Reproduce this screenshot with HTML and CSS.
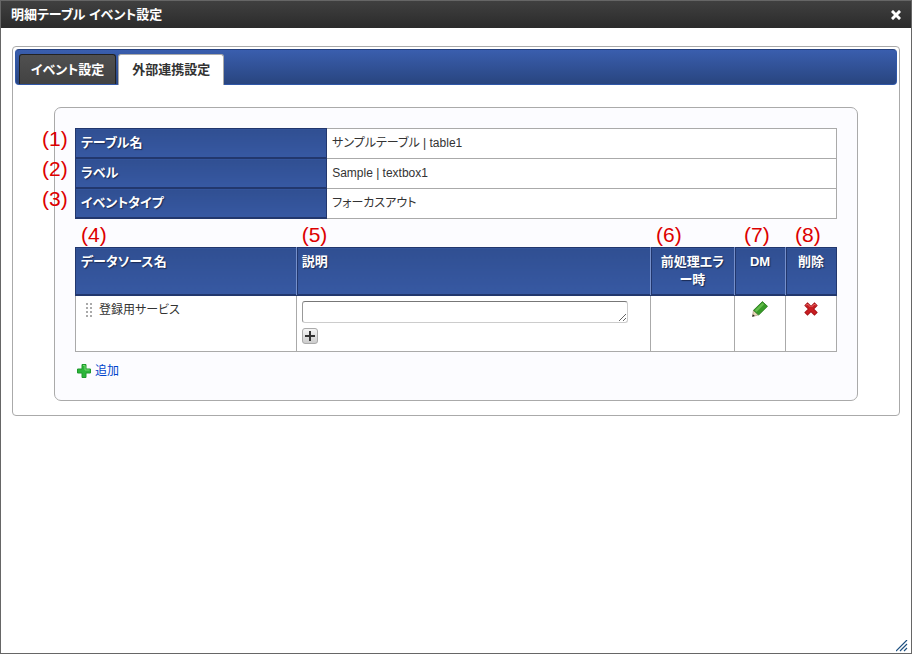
FILE: index.html
```html
<!DOCTYPE html>
<html lang="ja">
<head>
	<meta charset="utf-8">
	<title>明細テーブル イベント設定</title>
	<link rel="stylesheet" href="styles.css">
</head>
<body>
<div class="dialog">
	<div class="titlebar">
		<h1>明細テーブル イベント設定</h1>
		<button type="button" class="close" aria-label="閉じる">
			<svg width="10" height="10" viewBox="0 0 10 10"><path d="M2 2L8 8M8 2L2 8" stroke="#fff" stroke-width="3" stroke-linecap="square"/></svg>
		</button>
	</div>

	<div class="tabs">
		<ul class="tabnav">
			<li><a href="#event">イベント設定</a></li>
			<li class="active"><a href="#external">外部連携設定</a></li>
		</ul>

		<div class="panel" id="external">
			<table class="info">
				<tr>
					<th scope="row"><span class="mark">(1)</span>テーブル名</th>
					<td>サンプルテーブル | table1</td>
				</tr>
				<tr>
					<th scope="row"><span class="mark">(2)</span>ラベル</th>
					<td>Sample | textbox1</td>
				</tr>
				<tr>
					<th scope="row"><span class="mark">(3)</span>イベントタイプ</th>
					<td>フォーカスアウト</td>
				</tr>
			</table>

			<table class="list">
				<colgroup>
					<col class="col-name">
					<col class="col-desc">
					<col class="col-error">
					<col class="col-icon">
					<col class="col-icon">
				</colgroup>
				<thead>
					<tr>
						<th scope="col"><span class="mark">(4)</span>データソース名</th>
						<th scope="col"><span class="mark">(5)</span><label for="desc">説明</label></th>
						<th scope="col" class="center"><span class="mark">(6)</span>前処理エラー時</th>
						<th scope="col" class="center narrow"><span class="mark">(7)</span>DM</th>
						<th scope="col" class="center narrow"><span class="mark">(8)</span>削除</th>
					</tr>
				</thead>
				<tbody>
					<tr>
						<td>
							<div class="source">
								<svg class="grip" width="6" height="14" viewBox="0 0 6 14" fill="#aaa"><path d="M0 0h2v2H0zM4 0h2v2H4zM0 4h2v2H0zM4 4h2v2H4zM0 8h2v2H0zM4 8h2v2H4zM0 12h2v2H0zM4 12h2v2H4z"/></svg>
								登録用サービス
							</div>
						</td>
						<td>
							<textarea id="desc" rows="1"></textarea>
							<button type="button" class="expand" aria-label="拡張">
								<svg width="10" height="10" viewBox="0 0 10 10"><path d="M5 0V10M0 5H10" stroke="#333" stroke-width="2"/></svg>
							</button>
						</td>
						<td></td>
						<td class="center">
							<button type="button" class="icon" aria-label="DM">
								<svg width="16" height="16" viewBox="0 0 16 16">
									<path d="M1.400 9.500L6 14L.5 15.500z" fill="#ead9bb" stroke="#a08c6c" stroke-width=".6"/>
									<path d="M.8 13.200L2.900 14.900L.2 15.800z" fill="#222"/>
									<path d="M1.500 9.300L10.400 .6L15.500 5.300L6.700 14z" fill="#379b27" stroke="#227317" stroke-width=".8"/>
									<path d="M2.800 9.300L10.500 1.700L12.200 3.300L4.500 10.900z" fill="#63bb4a"/>
								</svg>
							</button>
						</td>
						<td class="center">
							<button type="button" class="icon" aria-label="削除">
								<svg width="16" height="16" viewBox="0 0 16 16">
									<path d="M4.500 4.500L11.500 11.500M11.500 4.500L4.500 11.500" stroke="#a51217" stroke-width="4.600" stroke-linecap="square"/>
									<path d="M4.500 4.500L11.500 11.500M11.500 4.500L4.500 11.500" stroke="#c81d21" stroke-width="3" stroke-linecap="square"/>
									<path d="M3 4.500L4.500 3L7.500 6M8.500 6L11.500 3L13 4.500" fill="none" stroke="#ec7373"/>
								</svg>
							</button>
						</td>
					</tr>
				</tbody>
			</table>

			<a class="add" href="#add">
				<svg width="14" height="14" viewBox="0 0 14 14">
					<path d="M5 .5H9V5H13.500V9H9V13.500H5V9H.5V5H5z" fill="#2cb53a" stroke="#1f9a2d"/>
					<path d="M6 1.500H8V6H12.500" fill="none" stroke="#74d86f"/>
				</svg>
				追加
			</a>
		</div>
	</div>

	<svg class="resize" width="12" height="12" viewBox="0 0 12 12"><path d="M0 11L11 0M4 11L11 4M8 11L11 8" stroke="#1d4f80" stroke-width="1.200"/></svg>
</div>
</body>
</html>
```
FILE: styles.css
```css
* { box-sizing: border-box; }

body {
	margin: 0;
	font-family: "Liberation Sans", "Noto Sans CJK JP", sans-serif;
	font-size: 12px;
	line-height: 18px;
	font-feature-settings: "palt";
	color: #333;
	background: #fff;
}

button {
	display: inline-flex;
	align-items: center;
	justify-content: center;
	padding: 0;
	border: 0;
	background: none;
	cursor: pointer;
}

.dialog {
	position: relative;
	min-height: 100vh;
	border: 1px solid #666;
}
.titlebar {
	display: flex;
	align-items: center;
	justify-content: space-between;
	height: 27px;
	padding: 0 10px;
	background: linear-gradient(#404040, #2b2b2b);
}
.titlebar h1 {
	margin: 0;
	font-size: 13px;
	color: #fff;
}
.resize {
	position: absolute;
	right: 3px;
	bottom: 1px;
}

.tabs {
	margin: 18px 11px 0;
	padding: 2px;
	border: 1px solid #aaa;
	border-radius: 4px;
}
.tabnav {
	display: flex;
	gap: 2px;
	height: 36px;
	margin: 0;
	padding: 4px 3px 0;
	list-style: none;
	background: linear-gradient(#3a5eae, #29457f);
	border: 1px solid #3057a7;
	border-top-color: #25417f;
	border-radius: 4px;
}
.tabnav a {
	display: block;
	height: 30px;
	padding: 6px 11px;
	border: 1px solid #222;
	border-bottom: 0;
	border-radius: 3px 3px 0 0;
	background: linear-gradient(#505050, #424242);
	font-size: 13px;
	font-weight: bold;
	color: #fff;
	text-decoration: none;
}
.tabnav .active a {
	height: 31px;
	padding: 6px 13px;
	border-color: #aaa;
	background: #fff;
	color: #333;
}

.panel {
	margin: 22px 39px 12px;
	padding: 20px;
	border: 1px solid #aaa;
	border-radius: 7px;
	background: #fcfcff;
}

table {
	width: 100%;
	border-collapse: collapse;
	table-layout: fixed;
}
th, td {
	padding: 5px;
	border: 1px solid #aaa;
	text-align: left;
	vertical-align: top;
}
td { background: #fff; }
th {
	position: relative;
	border-color: #22376d;
	background: linear-gradient(#304f92, #3759a3);
	font-size: 13px;
	color: #fff;
	text-shadow: 1px 1px 1px #1a2b55;
}
.center { text-align: center; }

.info th {
	width: 33%;
	box-shadow: inset 0 -1px #22376d;
}
.info td, .info th { padding: 5px 5px 6px; }

.list { margin-top: 28px; }
.list th {
	height: 48px;
	line-break: anywhere;
	box-shadow: inset 0 -1px #22376d;
}
.list th + th { box-shadow: inset 0 -1px #22376d, inset 1px 0 #22376d; }
.list th:not(:last-child) { border-right-color: #7690cb; }
.list td { height: 56px; }
.col-name { width: 29%; }
.col-error { width: 84px; }
.col-icon { width: 51px; }

/* numbers that point at the fields */
.mark {
	position: absolute;
	font-size: 21px;
	font-weight: normal;
	color: #d00;
	text-shadow: none;
}
.info .mark {
	top: 1px;
	left: -34px;
}
.list .mark {
	top: -22px;
	left: 5px;
}
.list .narrow .mark,
.list .narrow.center .mark { left: 9px; }

.source {
	display: flex;
	align-items: center;
	gap: 7px;
	padding-left: 5px;
}

textarea {
	display: block;
	width: 95%;
	height: 22px;
	margin-bottom: 5px;
	border: 1px solid #ccc;
	border-top-color: #777;
	border-left-color: #999;
	border-radius: 3px;
	background: #fff;
}
.expand {
	display: flex;
	width: 16px;
	height: 16px;
	border: 1px solid #aaa;
	border-radius: 3px;
	background: linear-gradient(#f5f5f5, #ccc);
}

.add {
	display: flex;
	align-items: center;
	gap: 4px;
	width: max-content;
	margin: 10px 2px 0;
	color: #04c;
	text-decoration: none;
}
```
